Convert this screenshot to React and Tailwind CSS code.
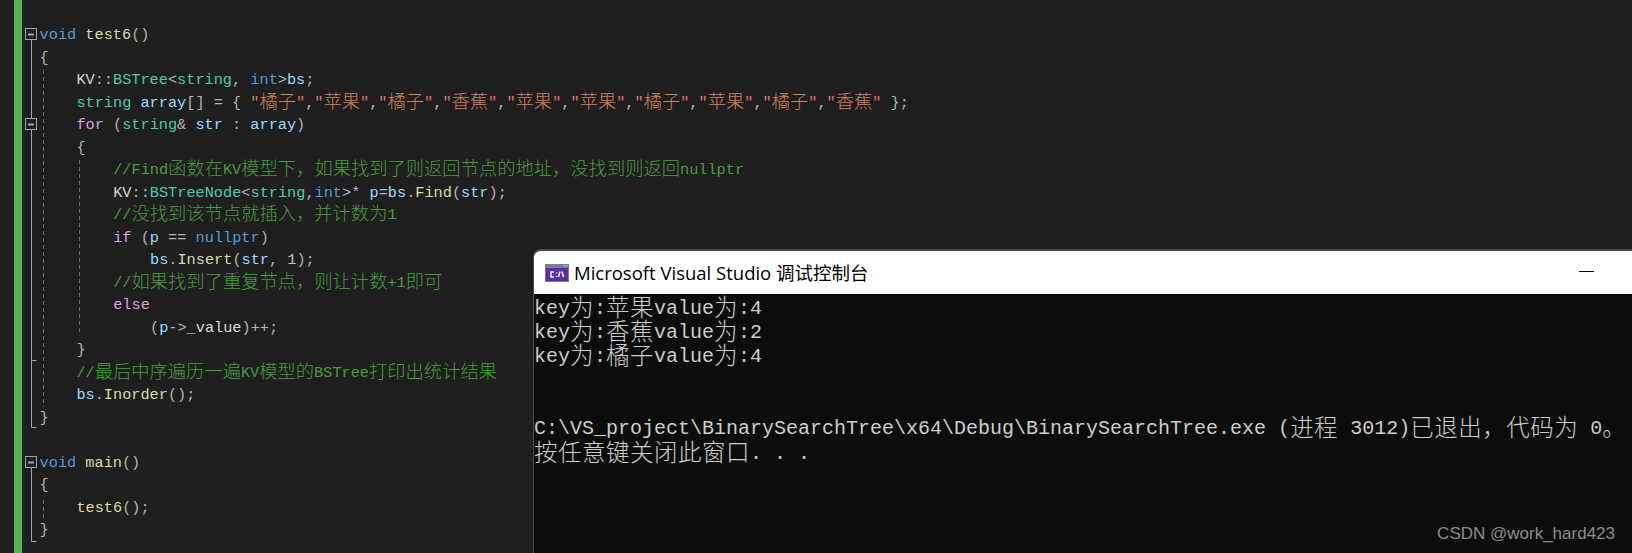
import React from 'react';

const kw = 'text-[#569cd6]';
const ty = 'text-[#4ec9b0]';
const fn = 'text-[#dcdcaa]';
const vr = 'text-[#9cdcfe]';
const ct = 'text-[#d8a0df]';
const st = 'text-[#d0805f]';
const cm = 'text-[#4a9c3f]';
const pu = 'text-[#b4b4b4]';
const ns = 'text-[#d8d8c8]';

const quoted = (names) =>
  names.flatMap((n, i) => [
    ['"' + n + '"', st],
    ...(i < names.length - 1 ? [[',', pu]] : []),
  ]);

const lines = [
  [0, ['void', kw], [' ', pu], ['test6', fn], ['()', pu]],
  [0, ['{', pu]],
  [1, ['KV', ns], ['::', pu], ['BSTree', ty], ['<', pu], ['string', ty], [', ', pu], ['int', kw], ['>', pu], ['bs', vr], [';', pu]],
  [1, ['string', ty], [' ', pu], ['array', vr], ['[] = { ', pu],
    ...quoted(['橘子', '苹果', '橘子', '香蕉', '苹果', '苹果', '橘子', '苹果', '橘子', '香蕉']), [' };', pu]],
  [1, ['for', ct], [' (', pu], ['string', ty], ['& ', pu], ['str', vr], [' : ', pu], ['array', vr], [')', pu]],
  [1, ['{', pu]],
  [2, ['//Find函数在KV模型下，如果找到了则返回节点的地址，没找到则返回nullptr', cm]],
  [2, ['KV', ns], ['::', pu], ['BSTreeNode', ty], ['<', pu], ['string', ty], [',', pu], ['int', kw], ['>* ', pu], ['p', vr], ['=', pu], ['bs', vr], ['.', pu], ['Find', fn], ['(', pu], ['str', vr], [');', pu]],
  [2, ['//没找到该节点就插入，并计数为1', cm]],
  [2, ['if', ct], [' (', pu], ['p', vr], [' == ', pu], ['nullptr', kw], [')', pu]],
  [3, ['bs', vr], ['.', pu], ['Insert', fn], ['(', pu], ['str', vr], [', ', pu], ['1', 'text-[#b5cea8]'], [');', pu]],
  [2, ['//如果找到了重复节点，则让计数+1即可', cm]],
  [2, ['else', ct]],
  [3, ['(', pu], ['p', vr], ['->', pu], ['_value', 'text-[#dadada]'], [')++;', pu]],
  [1, ['}', pu]],
  [1, ['//最后中序遍历一遍KV模型的BSTree打印出统计结果', cm]],
  [1, ['bs', vr], ['.', pu], ['Inorder', fn], ['();', pu]],
  [0, ['}', pu]],
  [0],
  [0, ['void', kw], [' ', pu], ['main', fn], ['()', pu]],
  [0, ['{', pu]],
  [1, ['test6', fn], ['();', pu]],
  [0, ['}', pu]],
];

const consoleLines = [
  'key为:苹果value为:4',
  'key为:香蕉value为:2',
  'key为:橘子value为:4',
  '',
  '',
  'C:\\VS_project\\BinarySearchTree\\x64\\Debug\\BinarySearchTree.exe (进程 3012)已退出，代码为 0。',
  '按任意键关闭此窗口. . .',
];

// wide glyphs need their own size so they stay two columns across
const Mixed = ({ text, wide }) =>
  text.split(/([\u3000-\u9fff\uff00-\uffef]+)/).map((part, i) =>
    i % 2 === 1 ? (
      <span key={i} className={wide}>{part}</span>
    ) : (
      part
    )
  );

const Gutter = () => (
  <svg className="absolute left-0 top-0" width="90" height="553" fill="none">
    <g stroke="#a5a5a5">
      <rect x="25.5" y="28.5" width="11" height="11" />
      <path d="M28 34.5h6" strokeWidth="2" />
      <path d="M31.5 40v78" />
      <rect x="25.5" y="118.5" width="11" height="11" />
      <path d="M28 124.5h6" strokeWidth="2" />
      <path d="M31.5 130v297.5h5M31.5 360.5h5" />
      <rect x="25.5" y="456.5" width="11" height="11" />
      <path d="M28 462.5h6" strokeWidth="2" />
      <path d="M31.5 468v73.5h5" />
    </g>
    <g stroke="#6f6f6f" strokeDasharray="4 3">
      <path d="M43.5 70v337M43.5 500v20M79.5 160v175" />
    </g>
  </svg>
);

const ConsoleIcon = () => (
  <svg width="24" height="18" viewBox="0 0 24 18" className="shrink-0">
    <rect width="24" height="18" fill="#7d7d92" />
    <rect x="1" y="4" width="22" height="13" fill="#5a2fa0" />
    <path d="M19 1h1.5v1.5H19zM21 1h1.5v1.5H21z" fill="#b5b5c5" />
    <path d="M9 8H6v5h3M11.5 8.5v1M11.5 12v1M15 7.5l-1.5 5.5M17 7.5l1.5 5.5" stroke="#f0f0f8" strokeWidth="1.5" fill="none" />
  </svg>
);

const App = () => {
  return (
    <div className="relative w-[1632px] h-[553px] overflow-hidden bg-[#1e1e1e]">
      {/* change margin */}
      <div className="absolute left-[14px] top-0 w-[8px] h-full bg-[#55b155]" />
      <Gutter />

      {/* editor */}
      <div className="flex flex-col pt-[24px] pl-[39.6px] font-['Liberation_Mono',monospace] text-[15.25px]">
        {lines.map(([indent, ...tokens], i) => (
          <div
            key={i}
            className="h-[22.5px] leading-[22.5px] whitespace-pre"
            style={{ paddingLeft: indent * 36.8 }}
          >
            {tokens.map(([text, color], j) => (
              <span key={j} className={color}>
                <Mixed text={text} wide="text-[18.3px] leading-[0] align-[-1px] font-['Noto_Sans_CJK_SC'] font-light" />
              </span>
            ))}
          </div>
        ))}
      </div>

      {/* debug console window */}
      <div className="absolute left-[533px] top-[249px] w-[1100px] h-[304px] flex flex-col rounded-tl-[8px] border-t-[2px] border-l-[1px] border-[#4a4a4a] overflow-hidden bg-[#0c0c0c]">
        <div className="h-[43px] shrink-0 bg-white flex items-center pl-[11px] gap-[5px] relative">
          <ConsoleIcon />
          <span className="font-['Open_Sans','Noto_Sans_CJK_SC',sans-serif] text-[18.5px] text-black whitespace-pre">
            Microsoft Visual Studio 调试控制台
          </span>
          <div className="absolute left-[1045px] top-[20px] w-[15px] h-[1px] bg-black" />
        </div>
        <div className="pt-[3px] font-['Liberation_Mono',monospace] text-[20px] text-[#cccccc]">
          {consoleLines.map((line, i) => (
            <div key={i} className="h-[24.1px] leading-[24.1px] whitespace-pre">
              <Mixed text={line} wide="text-[23.5px] leading-[0] align-[-2px] font-['Noto_Sans_CJK_SC'] font-light tracking-[0.5px]" />
            </div>
          ))}
        </div>
      </div>

      {/* watermark */}
      <div className="absolute right-[17px] top-[523px] font-['Liberation_Sans',sans-serif] text-[17px] leading-[22px] text-[#8c8c8c]">
        CSDN @work_hard423
      </div>
    </div>
  );
};

export default App;
